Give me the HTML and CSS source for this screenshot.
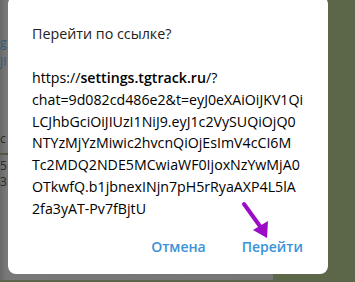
FILE: index.html
```html
<!DOCTYPE html>
<html>
<head>
<meta charset="utf-8">
<link rel="stylesheet" href="styles.css">
</head>
<body>
<div class="backdrop">
  <div class="chat">
    <div class="frag frag-g">g</div>
    <div class="frag frag-j">JI</div>
    <div class="frag frag-c">c</div>
    <div class="sep"></div>
    <div class="frag frag-5">5</div>
    <div class="frag frag-3">3</div>
  </div>
  <div class="wall"></div>
</div>
<div class="dialog">
  <div class="title">Перейти по ссылке?</div>
  <div class="url">https://<b>settings.tgtrack.ru</b>/?<br>chat=9d082cd486e2&amp;t=eyJ0eXAiOiJKV1Qi<br>LCJhbGciOiJIUzI1NiJ9.eyJ1c2VySUQiOjQ0<br>NTYzMjYzMiwic2hvcnQiOjEsImV4cCI6M<br>Tc2MDQ2NDE5MCwiaWF0IjoxNzYwMjA0<br>OTkwfQ.b1jbnexINjn7pH5rRyaAXP4L5lA<br>2fa3yAT-Pv7fBjtU</div>
  <div class="actions">
    <span class="btn">Отмена</span>
    <span class="btn">Перейти</span>
  </div>
</div>
<svg class="arrow" width="36" height="42" viewBox="0 0 36 42">
  <line x1="3" y1="3" x2="21" y2="28" stroke="#9b0cc6" stroke-width="4" stroke-linecap="round"/>
  <polygon points="12,29 27,20 26,37" fill="#9b0cc6"/>
</svg>
</body>
</html>
```
FILE: styles.css
```css
html, body {
  margin: 0;
  padding: 0;
}
body {
  width: 355px;
  height: 282px;
  overflow: hidden;
  position: relative;
  font-family: "Open Sans", "Noto Sans", sans-serif;
  background: #5c6749;
}
.backdrop {
  display: flex;
  height: 282px;
}
.chat {
  width: 273px;
  height: 280px;
  background: linear-gradient(to right, #686868, #787878 6px, #767676);
  display: flex;
  flex-direction: column;
  overflow: hidden;
}
.wall {
  flex: 1;
  background: #5c6749;
}
.frag {
  font-size: 12px;
  line-height: 13px;
  color: #2e5d7c;
  margin-left: 0;
}
.frag-g { margin-top: 36px; }
.frag-j { margin-top: 6px; }
.frag-c { margin-top: 64px; color: #2a2a2a; }
.sep { height: 2px; background: #4e5a44; margin-top: 8px; width: 10px; }
.frag-5 { margin-top: 4px; color: #2a2a2a; }
.frag-3 { margin-top: 3px; color: #2a2a2a; }
.dialog {
  position: absolute;
  left: 8px;
  top: -4px;
  width: 320px;
  height: 278px;
  background: #fff;
  border-radius: 8px;
  box-sizing: border-box;
  padding: 28px 24px 0 24px;
  color: #000;
}
.title {
  font-size: 14.3px;
  line-height: 20px;
  color: #222;
}
.url {
  margin-top: 23px;
  font-size: 14.2px;
  line-height: 21.8px;
  color: #000;
  white-space: nowrap;
}
.url b {
  font-weight: 600;
}
.actions {
  display: flex;
  justify-content: flex-end;
  gap: 36px;
  margin-top: 17px;
  padding-right: 1px;
}
.btn {
  font-size: 14px;
  font-weight: 600;
  color: #3a92d8;
}
.arrow {
  position: absolute;
  left: 241px;
  top: 201px;
}
```
